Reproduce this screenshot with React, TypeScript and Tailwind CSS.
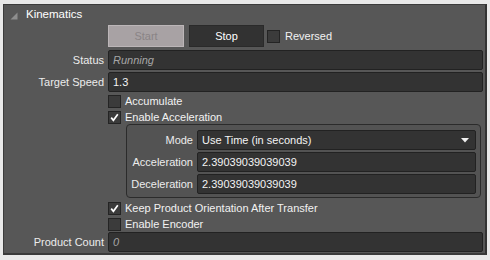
import React from "react";

function Check({ checked }: { checked?: boolean }) {
  return (
    <span className="w-[13px] h-[13px] shrink-0 bg-[#3b3b3b] border border-[#242424] flex items-center justify-center">
      {checked && (
        <svg width="9" height="9" viewBox="0 0 9 9">
          <path d="M1.2 4.6 L3.4 7.3 L7.8 1.2" stroke="#ffffff" strokeWidth="1.7" fill="none" strokeLinejoin="miter" />
        </svg>
      )}
    </span>
  );
}

function Field({ children, italic }: { children?: React.ReactNode; italic?: boolean }) {
  return (
    <div
      className={
        "h-[20px] rounded-[2px] border border-[#222222] bg-[#333333] pl-[4px] flex items-center leading-none " +
        (italic ? "italic text-[#a6a6a6]" : "text-[#f4f4f4]")
      }
    >
      {children}
    </div>
  );
}

function Label({ children }: { children: React.ReactNode }) {
  return <div className="flex items-center justify-end text-[#ececec] leading-none">{children}</div>;
}

export default function App() {
  return (
    <div className="w-[490px] h-[260px] bg-[#e9e9e9] pt-[4px] pl-[3px] font-['Liberation_Sans',Arial,sans-serif] text-[11px]">
      <div className="w-[484px] h-[251px] bg-[#575757] border-l border-t border-[#3c3c3c] border-r-2 border-r-[#333333] border-b-2 border-b-[#3a3a3a] flex flex-col pr-[2px]">
        {/* header */}
        <div className="h-[20px] flex items-center pl-[6px]">
          <svg width="8" height="8" viewBox="0 0 8 8" className="mt-[1px]">
            <path d="M0.5 7.5 L7.5 0.5 L7.5 7.5 Z" fill="#8e8e8e" />
          </svg>
          <span className="ml-[8px] text-white text-[11.5px] leading-none">Kinematics</span>
        </div>

        {/* buttons */}
        <div className="grid grid-cols-[100px_1fr] gap-x-[4px] h-[22px]">
          <div />
          <div className="flex items-center">
            <div className="w-[76px] h-[22px] bg-[#a8a2a4] border border-[#bcb6b8] flex items-center justify-center text-[#8a8486]">
              Start
            </div>
            <div className="ml-[5px] w-[75px] h-[22px] bg-[#323232] border border-[#2a2a2a] flex items-center justify-center text-white">
              Stop
            </div>
            <div className="ml-[3px]">
              <Check />
            </div>
            <span className="ml-[5px] text-[#f2f2f2]">Reversed</span>
          </div>
        </div>

        {/* status */}
        <div className="grid grid-cols-[100px_1fr] gap-x-[4px] mt-[3px]">
          <Label>Status</Label>
          <Field italic>Running</Field>
        </div>
        <div className="grid grid-cols-[100px_1fr] gap-x-[4px] mt-[2px]">
          <Label>Target Speed</Label>
          <Field>1.3</Field>
        </div>

        {/* checkboxes */}
        <div className="grid grid-cols-[100px_1fr] gap-x-[4px] mt-[1px] h-[16px]">
          <div />
          <div className="flex items-center">
            <Check />
            <span className="ml-[4px] text-[#f2f2f2]">Accumulate</span>
          </div>
        </div>
        <div className="grid grid-cols-[100px_1fr] gap-x-[4px] h-[15px]">
          <div />
          <div className="flex items-center">
            <Check checked />
            <span className="ml-[4px] text-[#f2f2f2]">Enable Acceleration</span>
          </div>
        </div>

        {/* group box */}
        <div className="ml-[122px] mr-[2px] h-[74px] rounded-[4px] border border-[#2b2b2b] bg-[#535353] pt-[5px] pb-[3px] pr-[4px] flex flex-col gap-[2px]">
          <div className="grid grid-cols-[66px_1fr] gap-x-[4px]">
            <Label>Mode</Label>
            <div className="h-[20px] rounded-[2px] border border-[#222222] bg-[#333333] pl-[4px] pr-[6px] flex items-center justify-between text-[#f4f4f4] leading-none">
              <span>Use Time (in seconds)</span>
              <svg width="8" height="5" viewBox="0 0 8 5">
                <path d="M0 0 L8 0 L4 4.5 Z" fill="#f0f0f0" />
              </svg>
            </div>
          </div>
          <div className="grid grid-cols-[66px_1fr] gap-x-[4px]">
            <Label>Acceleration</Label>
            <Field>2.39039039039039</Field>
          </div>
          <div className="grid grid-cols-[66px_1fr] gap-x-[4px]">
            <Label>Deceleration</Label>
            <Field>2.39039039039039</Field>
          </div>
        </div>

        <div className="grid grid-cols-[100px_1fr] gap-x-[4px] mt-[2px] h-[16px]">
          <div />
          <div className="flex items-center">
            <Check checked />
            <span className="ml-[4px] text-[#f2f2f2]">Keep Product Orientation After Transfer</span>
          </div>
        </div>
        <div className="grid grid-cols-[100px_1fr] gap-x-[4px] h-[16px]">
          <div />
          <div className="flex items-center">
            <Check />
            <span className="ml-[4px] text-[#f2f2f2]">Enable Encoder</span>
          </div>
        </div>

        <div className="grid grid-cols-[100px_1fr] gap-x-[4px]">
          <Label>Product Count</Label>
          <Field italic>0</Field>
        </div>
      </div>
    </div>
  );
}
